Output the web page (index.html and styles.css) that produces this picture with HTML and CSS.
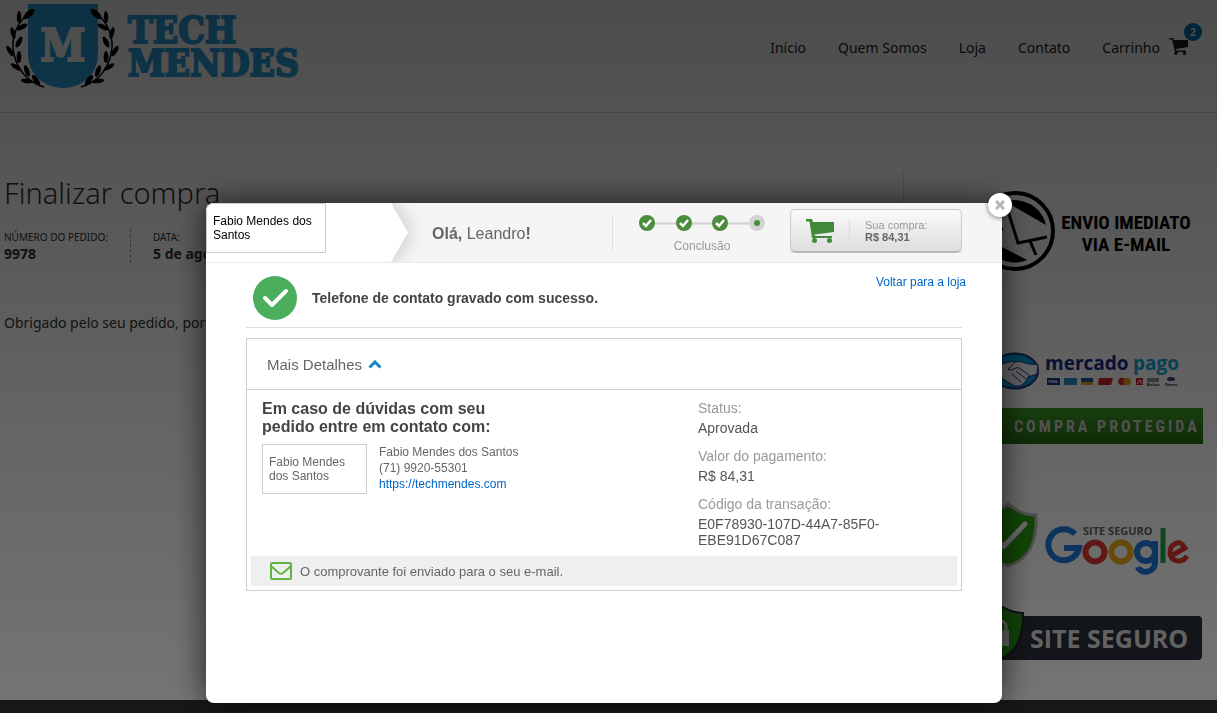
FILE: index.html
```html
<!DOCTYPE html>
<html lang="pt-BR">
<head>
<meta charset="utf-8">
<meta name="viewport" content="width=device-width, initial-scale=1">
<title>Finalizar compra - Tech Mendes</title>
<link rel="stylesheet" href="styles.css">
</head>
<body>
<header class="site-header">
  <a class="logo" href="#" aria-label="Tech Mendes">
    <svg class="crest" width="112" height="90" viewBox="0 0 112 90" aria-hidden="true">
      <defs>
        <g id="laurel">
          <path d="M31 11C17 22 10 38 14 54C17 69 27 82 44 87" fill="none" stroke="#000" stroke-width="1.500"/>
          <g fill="#000">
            <ellipse cx="29" cy="14" rx="7" ry="3" transform="rotate(-42 29 14)"/>
            <ellipse cx="19" cy="17" rx="6" ry="2.200" transform="rotate(-88 19 17)"/>
            <ellipse cx="22" cy="27" rx="6" ry="2.400" transform="rotate(-28 22 27)"/>
            <ellipse cx="13" cy="33" rx="6" ry="2.200" transform="rotate(75 13 33)"/>
            <ellipse cx="19" cy="42" rx="6" ry="2.400" transform="rotate(-62 19 42)"/>
            <ellipse cx="10" cy="51" rx="6" ry="2.200" transform="rotate(58 10 51)"/>
            <ellipse cx="19" cy="57" rx="6" ry="2.400" transform="rotate(-90 19 57)"/>
            <ellipse cx="16" cy="67" rx="6" ry="2.200" transform="rotate(32 16 67)"/>
            <ellipse cx="27" cy="71" rx="6" ry="2.400" transform="rotate(70 27 71)"/>
            <ellipse cx="27" cy="81" rx="6" ry="2.200" transform="rotate(8 27 81)"/>
            <ellipse cx="36" cy="80" rx="6" ry="2.400" transform="rotate(52 36 80)"/>
          </g>
        </g>
      </defs>
      <path d="M28 4H98V54C98 74 82 88 63 88S28 74 28 54Z" fill="#2ba3df"/>
      <use href="#laurel"/>
      <use href="#laurel" transform="matrix(-1 0 0 1 125 0)"/>
      <text class="crest-letter" x="63" y="61" text-anchor="middle">M</text>
    </svg>
    <span class="logo-name">TECH<br>MENDES</span>
  </a>
  <nav class="site-nav">
    <a href="#">Início</a>
    <a href="#">Quem Somos</a>
    <a href="#">Loja</a>
    <a href="#">Contato</a>
    <a class="nav-cart" href="#">Carrinho
      <svg width="19" height="17" viewBox="0 0 19 17" aria-hidden="true"><path d="M0 0H4L5 2H19V9L7 11L7.300 12.500H17V14H6L3 1.500H0Z" fill="#222"/><circle cx="7" cy="15.300" r="1.700" fill="#222"/><circle cx="15.500" cy="15.300" r="1.700" fill="#222"/></svg>
      <span class="badge">2</span>
    </a>
  </nav>
</header>

<div class="page">
  <main class="order">
    <h1>Finalizar compra</h1>
    <ul class="order-facts">
      <li>NÚMERO DO PEDIDO:<strong>9978</strong></li>
      <li>DATA:<strong>5 de agosto</strong></li>
    </ul>
    <p>Obrigado pelo seu pedido, por</p>
  </main>
  <aside class="seals">
    <svg class="seal seal-mail" width="227" height="82" viewBox="976 190 227 82" role="img">
      <circle cx="1015" cy="231" r="38" fill="none" stroke="#000" stroke-width="4"/>
      <path d="M1006 201C1024 197 1042 207 1046 225L1013 206Z"/>
      <path d="M990 252C1003 263 1016 265 1027 260L1002 247Z"/>
      <path d="M984 217L1008 211L1018 243L1047 237M1003 229L988 233M1030 241L1036 255" fill="none" stroke="#000" stroke-width="3"/>
      <text class="seal-condensed" x="1126" y="229" text-anchor="middle">ENVIO IMEDIATO</text>
      <text class="seal-condensed" x="1126" y="251" text-anchor="middle">VIA E-MAIL</text>
    </svg>
    <svg class="seal seal-pago" width="227" height="42" viewBox="976 350 227 42" role="img">
      <ellipse cx="1015" cy="371" rx="23" ry="17.500" fill="#00a5e8" stroke="#24317f" stroke-width="2"/>
      <path d="M992 365C1004 366 1008 360 1015 362C1022 360 1028 366 1038 364L1037 374L1028 377C1025 385 1018 389 1011 384L1000 377L992 376Z" fill="#fff" stroke="#24317f"/>
      <path d="M1015 362L1008 369C1012 372 1016 366 1019 368L1030 376M1012 374L1021 382M1016 371L1026 379" fill="none" stroke="#24317f"/>
      <text class="seal-pay" x="1045" y="370" fill="#1c2c86">mercado</text>
      <text class="seal-pay" x="1133" y="370" fill="#13a8dd">pago</text>
      <g>
        <path d="M1047 378H1060V385H1047Z" fill="#1c3b8c"/>
        <path d="M1064 378H1077V385H1064Z" fill="#2b8fc7"/>
        <path d="M1081 378H1093V382H1081Z" fill="#27549c"/><path d="M1081 382H1093V385H1081Z" fill="#e5a52b"/>
        <path d="M1099 378H1113L1111 385H1098Z" fill="#c8232c"/>
        <circle cx="1122" cy="381.500" r="3.800" fill="#d42a2a"/><circle cx="1127" cy="381.500" r="3.800" fill="#ef9b1d"/>
        <path d="M1136 378H1143V385H1136Z" fill="#d8232c"/><path d="M1137 384L1140 380L1142 384" fill="none" stroke="#fff"/>
        <path d="M1148 378V382M1150 378V382M1152 378V382M1154 378V382M1156 378V382M1158 378V382" stroke="#222"/>
        <ellipse cx="1171" cy="379" rx="4" ry="2" fill="#3d4a7b"/>
      </g>
      <g class="seal-tiny"><text x="1048" y="383" fill="#fff">VISA</text><text x="1147" y="386" fill="#222">Boleto</text><text x="1165" y="386" fill="#222">Diners</text></g>
    </svg>
    <svg class="seal seal-buy" width="227" height="36" viewBox="976 408 227 36" role="img">
      <defs><linearGradient id="buy" x2="0" y2="1"><stop stop-color="#3e9a25"/><stop offset=".45" stop-color="#358a20"/><stop offset="1" stop-color="#256d16"/></linearGradient></defs>
      <path d="M976 408H1203V444H976Z" fill="url(#buy)"/>
      <text class="seal-track" x="1014" y="432">COMPRA PROTEGIDA</text>
    </svg>
    <svg class="seal seal-google" width="227" height="75" viewBox="976 500 227 75" role="img">
      <path d="M1008 504C1016 511 1026 515 1036 515C1037 538 1032 559 1008 566C985 559 979 538 980 515C990 515 1000 511 1008 504Z" fill="#2aa410" stroke="#bbb" stroke-width="3"/>
      <path d="M994 539L1004 546L1025 524" fill="none" stroke="#fff" stroke-width="5" stroke-linecap="round"/>
      <g fill="none" stroke-width="6">
        <path d="M1075 534A15.500 15.500 0 1 0 1079 548H1064" stroke="#1f7be0"/>
        <circle cx="1095" cy="552" r="9.500" stroke="#e53a31"/>
        <circle cx="1121" cy="552" r="9.500" stroke="#f3ae12"/>
        <circle cx="1146" cy="552" r="9" stroke="#1f7be0"/><path d="M1155 541V562C1155 574 1140 574 1138 567" stroke="#1f7be0"/>
        <path d="M1163 528V563" stroke="#1fa450" stroke-width="5"/>
        <path d="M1171 556L1185 548C1180 538 1170 544 1170 553C1171 563 1183 563 1187 556" stroke="#e53a31" stroke-width="5"/>
      </g>
      <text class="seal-small" x="1083" y="535">SITE SEGURO</text>
    </svg>
    <svg class="seal seal-safe" width="227" height="58" viewBox="976 603 227 58" role="img">
      <rect x="980" y="616" width="222" height="44" rx="4" fill="#2b303b"/>
      <path d="M998 604C1005 609 1014 613 1023 613C1023 635 1018 653 998 660C984 653 976 640 976 613Z" fill="#2c9a17" stroke="#22262f" stroke-width="2"/>
      <path d="M990 630H1009V646H990Z" fill="#ddd"/>
      <path d="M996 631V626C996 620 1006 620 1006 626V631" fill="none" stroke="#ddd" stroke-width="3"/>
      <text class="seal-safe-text" x="1030" y="648">SITE SEGURO</text>
    </svg>
  </aside>
</div>
<footer class="site-footer"></footer>

<div class="overlay">
  <section class="modal" role="dialog" aria-modal="true" aria-label="Conclusão da compra">
    <button class="close" type="button" aria-label="Fechar">
      <svg width="10" height="10" viewBox="0 0 10 10"><path d="M1 1L9 9M9 1L1 9" stroke="#b5b5b5" stroke-width="3"/></svg>
    </button>
    <header class="modal-head">
      <div class="brand-shadow"><div class="brand"><div class="brand-box">Fabio Mendes dos Santos</div></div></div>
      <p class="hello"><b>Olá,</b> Leandro<b>!</b></p>
      <div class="steps">
        <svg width="126" height="16" viewBox="0 0 126 16" aria-hidden="true">
          <path d="M8 8.500H118" stroke="#d0d0d0" stroke-width="2"/>
          <g fill="#4a8d3c"><circle cx="8" cy="8" r="8"/><circle cx="45" cy="8" r="8"/><circle cx="81" cy="8" r="8"/></g>
          <circle cx="118" cy="8" r="8" fill="#d3d3d3"/><circle cx="118" cy="8" r="3" fill="#4a8d3c"/>
          <path d="M4 8L7 11L12 5M41 8L44 11L49 5M77 8L80 11L85 5" fill="none" stroke="#fff" stroke-width="2.500"/>
        </svg>
        <span>Conclusão</span>
      </div>
      <button class="purchase" type="button">
        <svg width="28" height="24" viewBox="0 0 28 24" aria-hidden="true"><path d="M0 0H6L7 3H28V13L8.500 15.500L9 17H26V19H6L3.500 2.500H0Z" fill="#43893a"/><circle cx="8.500" cy="21.500" r="2.500" fill="#43893a"/><circle cx="23.500" cy="21.500" r="2.500" fill="#43893a"/></svg>
        <span class="purchase-text">Sua compra:<b>R$ 84,31</b></span>
      </button>
    </header>
    <div class="modal-body">
      <div class="success">
        <svg width="44" height="44" viewBox="0 0 44 44" aria-hidden="true"><circle cx="22" cy="22" r="22" fill="#4bae5c"/><path d="M12 22L19 29L33 15" fill="none" stroke="#fff" stroke-width="4" stroke-linecap="round" stroke-linejoin="round"/></svg>
        <strong>Telefone de contato gravado com sucesso.</strong>
        <a class="back" href="#">Voltar para a loja</a>
      </div>
      <div class="details">
        <button class="details-toggle" type="button" aria-expanded="true">Mais Detalhes
          <svg width="14" height="9" viewBox="0 0 14 9" aria-hidden="true"><path d="M1.500 7.500L7 2L12.500 7.500" fill="none" stroke="#1488c6" stroke-width="3"/></svg>
        </button>
        <div class="details-body">
          <div class="contact">
            <h2>Em caso de dúvidas com seu pedido entre em contato com:</h2>
            <div class="seller">
              <div class="seller-box">Fabio Mendes dos Santos</div>
              <address>Fabio Mendes dos Santos<br>(71) 9920-55301<br><a href="#">https://techmendes.com</a></address>
            </div>
          </div>
          <dl class="payment">
            <div><dt>Status:</dt><dd>Aprovada</dd></div>
            <div><dt>Valor do pagamento:</dt><dd>R$ 84,31</dd></div>
            <div><dt>Código da transação:</dt><dd>E0F78930-107D-44A7-85F0-EBE91D67C087</dd></div>
          </dl>
        </div>
        <p class="notice">
          <svg width="22" height="18" viewBox="0 0 22 18" aria-hidden="true"><rect x="1" y="1" width="20" height="16" rx="1" fill="none" stroke="#62b346" stroke-width="2"/><path d="M1 4L9 11Q11 12.500 13 11L21 4" fill="none" stroke="#62b346" stroke-width="2"/></svg>
          O comprovante foi enviado para o seu e-mail.
        </p>
      </div>
    </div>
  </section>
</div>
</body>
</html>
```

FILE: styles.css
```css
* { box-sizing: border-box; }
body {
  margin: 0;
  min-height: 100vh;
  display: flex;
  flex-direction: column;
  overflow: hidden;
  background: #fff;
  color: #333;
  font-family: "Noto Sans", "Open Sans", sans-serif;
}
h1, h2, p, ul, dl, dd { margin: 0; padding: 0; }
a { text-decoration: none; }
button { font: inherit; cursor: pointer; }

.site-header {
  display: flex;
  justify-content: space-between;
  height: 113px;
  border-bottom: 1px solid #ddd;
}
.logo { display: flex; gap: 16px; color: #2ba3df; }
.crest { overflow: visible; }
.crest-letter {
  font: bold 45px "DejaVu Serif Condensed", "DejaVu Serif", serif;
  fill: #fff;
  stroke: #fff;
  stroke-width: 2px;
}
.logo-name {
  padding-top: 14px;
  font: bold 37px/33px "DejaVu Serif Condensed", "DejaVu Serif", serif;
  -webkit-text-stroke: 2px #2ba3df;
}
.site-nav {
  display: flex;
  gap: 32px;
  padding: 38px 29px 0 0;
  font-size: 14px;
  line-height: 20px;
}
.site-nav a { color: #222; }
.nav-cart { position: relative; display: flex; gap: 9px; }
.badge {
  position: absolute;
  top: -15px;
  right: -14px;
  width: 18px;
  height: 18px;
  border-radius: 50%;
  background: #0077bd;
  color: #fff;
  font-size: 11px;
  font-weight: 600;
  line-height: 18px;
  text-align: center;
}

.page { flex: 1; display: grid; grid-template-columns: 1fr 314px; padding-top: 59px; }
.order { padding-left: 4px; }
.order h1 { font-size: 29px; font-weight: 300; line-height: 42px; }
.order-facts {
  display: flex;
  margin-top: 15px;
  list-style: none;
  font-size: 10px;
  line-height: 16px;
  white-space: nowrap;
}
.order-facts li { padding-right: 22px; margin-right: 22px; border-right: 1px dashed #999; }
.order-facts li:last-child { border: 0; }
.order-facts strong { display: block; font-size: 14px; line-height: 18px; }
.order p { margin-top: 50px; font-size: 14px; line-height: 20px; }
.seals {
  display: flex;
  flex-direction: column;
  align-items: flex-end;
  padding: 18px 14px 0 0;
  border-left: 1px solid #ddd;
}
.seal-pago { margin-top: 78px; }
.seal-buy { margin-top: 16px; }
.seal-google { margin-top: 56px; }
.seal-safe { margin-top: 28px; }
.seal-condensed { font: bold 19px "Liberation Sans Narrow", "Roboto Condensed", "Open Sans Condensed", "DejaVu Sans Condensed", sans-serif; }
.seal-pay { font: bold 19px "Open Sans", sans-serif; }
.seal-tiny { font: bold 4px "Liberation Sans", sans-serif; }
.seal-track { font: bold 16px "Liberation Sans Narrow", "Roboto Condensed", sans-serif; letter-spacing: 3px; fill: #ccc; }
.seal-small { font: bold 11px "Open Sans", sans-serif; fill: #666; }
.seal-safe-text { font: bold 25px "Open Sans", sans-serif; fill: #ddd; }
.site-footer { height: 13px; background: #333; }

.overlay {
  position: fixed;
  inset: 0;
  display: flex;
  justify-content: center;
  align-items: flex-start;
  padding: 203px 9px 0 0;
  background: linear-gradient(rgba(0, 0, 0, .7), rgba(0, 0, 0, .54));
  font-family: "Liberation Sans", Arial, sans-serif;
}
.modal {
  position: relative;
  width: 100%;
  max-width: 796px;
  min-height: 500px;
  border-radius: 8px;
  background: #fff;
  box-shadow: 0 0 32px rgba(0, 0, 0, .7);
  color: #666;
  font-size: 12px;
}
.modal a { color: #0066c8; }
.close {
  position: absolute;
  z-index: 1;
  top: -10px;
  right: -10px;
  width: 24px;
  height: 24px;
  display: grid;
  place-items: center;
  padding: 0;
  border: 0;
  border-radius: 50%;
  background: #fff;
  box-shadow: 0 1px 5px rgba(0, 0, 0, .5);
}
.modal-head {
  display: flex;
  height: 60px;
  padding-right: 40px;
  overflow: hidden;
  border-bottom: 1px solid #ebebeb;
  border-radius: 8px 8px 0 0;
  background: #f5f5f5;
}
.brand-shadow { filter: drop-shadow(4px 0 9px rgba(0, 0, 0, .16)); }
.brand {
  width: 202px;
  height: 100%;
  background: #fff;
  clip-path: polygon(0 0, 185px 0, 100% 50%, 185px 100%, 0 100%);
}
.brand-box {
  width: 120px;
  height: 50px;
  padding: 10px 6px;
  border: 1px solid #ccc;
  border-radius: 8px 0 0 0;
  color: #000;
  line-height: 14px;
}
.hello { flex: 1; padding: 22px 0 0 24px; font-size: 16px; line-height: 18px; }
.steps {
  display: flex;
  flex-direction: column;
  align-items: center;
  align-self: flex-start;
  gap: 8px;
  height: 35px;
  margin: 12px 25px 0 0;
  padding: 0 0 0 26px;
  border-left: 1px solid #e0e0e0;
  color: #999;
  line-height: 14px;
}
.steps svg { flex-shrink: 0; }
.purchase {
  display: flex;
  align-items: center;
  gap: 15px;
  width: 172px;
  height: 44px;
  margin-top: 6px;
  padding: 0 15px;
  border: 1px solid #ccc;
  border-bottom: 2px solid #b9b9b9;
  border-radius: 5px;
  background: linear-gradient(#fafafa, #dedede);
  color: #999;
  font-size: 11px;
  line-height: 12px;
  text-align: left;
}
.purchase-text { padding-left: 15px; border-left: 1px solid #ddd; }
.purchase-text b { display: block; color: #666; }

.modal-body { padding: 10px 40px 0; }
.success {
  position: relative;
  display: flex;
  align-items: center;
  gap: 15px;
  height: 55px;
  padding: 0 0 4px 7px;
  border-bottom: 1px solid #ddd;
  color: #444;
  font-size: 14px;
}
.back { position: absolute; top: 2px; right: -4px; font-size: 12px; line-height: 14px; }
.details { margin-top: 10px; border: 1px solid #ccc; }
.details-toggle {
  display: flex;
  align-items: center;
  gap: 6px;
  width: 100%;
  height: 51px;
  padding: 0 20px;
  border: 0;
  border-bottom: 1px solid #ccc;
  background: none;
  color: #666;
  font-size: 15px;
}
.details-body { display: grid; grid-template-columns: 436px 1fr; padding: 10px 15px 8px; }
.contact h2 { max-width: 240px; color: #444; font-size: 16px; line-height: 18px; }
.seller { display: flex; gap: 12px; margin-top: 8px; }
.seller-box { width: 105px; height: 50px; padding: 10px 6px; border: 1px solid #ccc; line-height: 14px; }
.seller address { font-style: normal; line-height: 16px; }
.payment { display: grid; gap: 12px; font-size: 14px; line-height: 16px; }
.payment dt { margin-bottom: 4px; color: #999; }
.payment dd { max-width: 200px; color: #555; }
.notice {
  display: flex;
  align-items: center;
  gap: 8px;
  height: 30px;
  margin: 0 4px 4px;
  padding-left: 19px;
  background: #efefef;
  font-size: 13px;
}
```
